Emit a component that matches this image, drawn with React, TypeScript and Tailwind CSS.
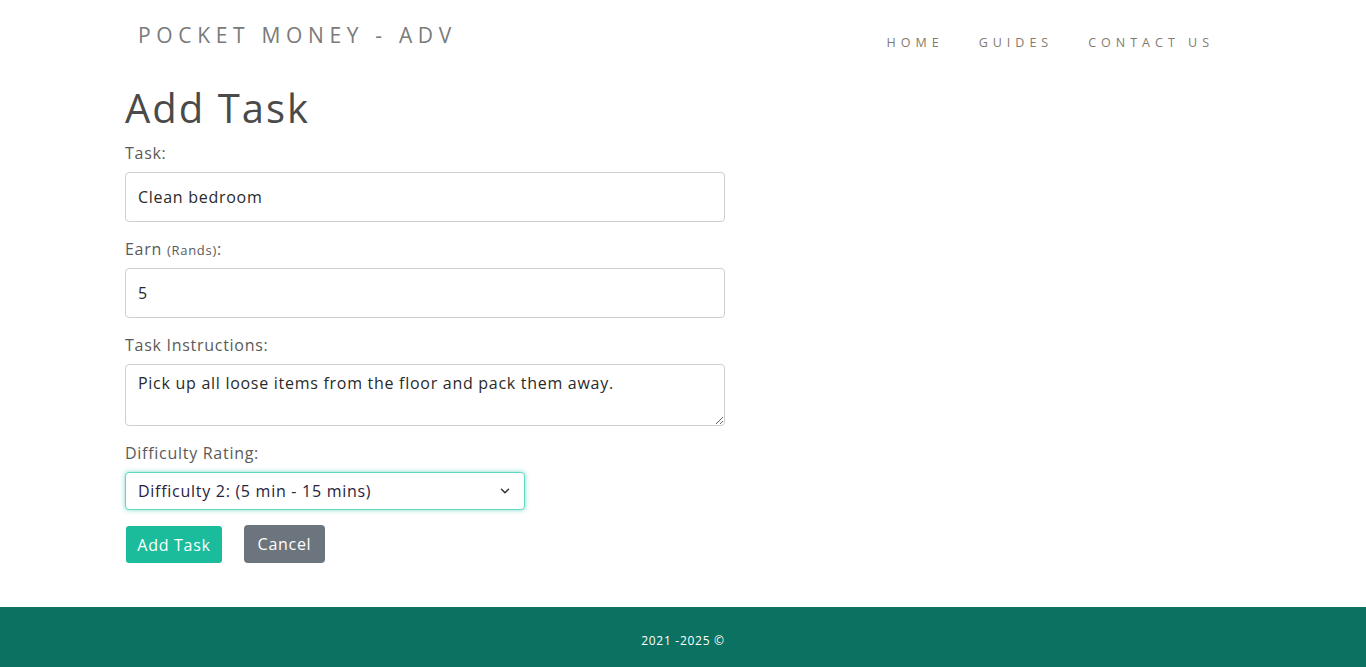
import { ChevronDown } from "lucide-react";

const font = { fontFamily: "'Open Sans', 'Liberation Sans', sans-serif" };

function Header() {
  return (
    <header className="flex items-start justify-between px-[138px] pt-[22px] h-[84px]">
      <div className="text-[21px] tracking-[0.27em] text-[#7a7a7a] leading-[26px]">
        POCKET MONEY - ADV
      </div>
      <nav className="flex gap-[35px] pt-[12px] pr-[14px] text-[12.5px] tracking-[0.4em] text-[#857a6e]">
        <a>HOME</a>
        <a>GUIDES</a>
        <a>CONTACT US</a>
      </nav>
    </header>
  );
}

function Field({ label, children }: { label: React.ReactNode; children: React.ReactNode }) {
  return (
    <div className="mb-[15px]">
      <label className="block text-[16px] leading-[24px] text-[#5a5a5a] mb-[7px]">{label}</label>
      {children}
    </div>
  );
}

export default function App() {
  return (
    <div className="min-h-[667px] flex flex-col bg-white tracking-[0.045em]" style={font}>
      <Header />
      <main className="flex-1 px-[125px]">
        <h1 className="text-[40px] leading-[48px] tracking-[0.05em] text-[#4a4a4a] mb-[9px]">Add Task</h1>
        <form className="w-[600px]">
          <Field label="Task:">
            <input
              defaultValue="Clean bedroom"
              className="w-full h-[50px] px-[12px] border border-[#cfcfcf] rounded-[4px] text-[16px] text-[#2a2a2a] outline-none"
            />
          </Field>
          <Field
            label={
              <>
                Earn <small className="text-[13px] leading-none">(Rands)</small>:
              </>
            }
          >
            <input
              defaultValue="5"
              className="w-full h-[50px] px-[12px] border border-[#cfcfcf] rounded-[4px] text-[16px] text-[#2a2a2a] outline-none"
            />
          </Field>
          <Field label="Task Instructions:">
            <textarea
              defaultValue="Pick up all loose items from the floor and pack them away."
              className="block w-full h-[62px] px-[12px] py-[6px] border border-[#cfcfcf] rounded-[4px] text-[16px] leading-[24px] text-[#2a2a2a] outline-none"
            />
          </Field>
          <Field label="Difficulty Rating:">
            <div className="relative w-[400px]">
              <select
                defaultValue="2"
                className="w-full h-[38px] px-[12px] appearance-none bg-white border border-[#5fd9bf] rounded-[4px] text-[16px] text-[#2a2240] shadow-[0_0_5px_rgba(26,188,156,0.55)] outline-none"
              >
                <option value="1">Difficulty 1: (0 min - 5 mins)</option>
                <option value="2">Difficulty 2: (5 min - 15 mins)</option>
                <option value="3">Difficulty 3: (15 min - 30 mins)</option>
              </select>
              <ChevronDown className="absolute right-[13px] top-[12px] w-[14px] h-[14px] text-[#333] pointer-events-none" strokeWidth={2.5} />
            </div>
          </Field>
          <div className="flex items-start gap-[22px]">
            <button type="button" className="h-[37px] w-[96px] ml-[1px] mt-[1px] bg-[#1abc9c] text-white text-[16px] rounded-[3px]">
              Add Task
            </button>
            <button type="button" className="h-[38px] w-[81px] bg-[#6c757d] text-white text-[16px] rounded-[4px]">
              Cancel
            </button>
          </div>
        </form>
      </main>
      <footer className="h-[60px] bg-[#0b7160] flex items-center justify-center pt-[8px] text-white text-[12px]">
        2021 -2025 ©
      </footer>
    </div>
  );
}
